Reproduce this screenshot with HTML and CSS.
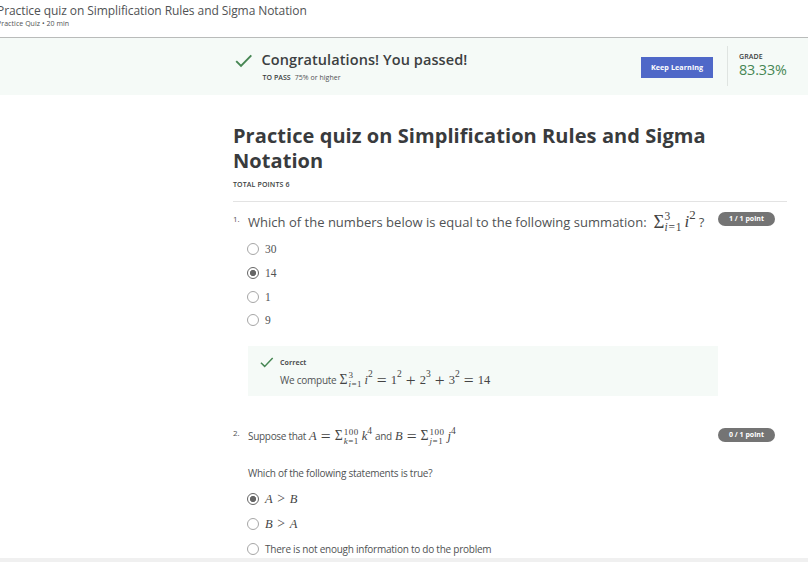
FILE: index.html
```html
<!DOCTYPE html>
<html lang="en">
<head>
<meta charset="utf-8">
<title>Practice quiz on Simplification Rules and Sigma Notation</title>
<link rel="stylesheet" href="styles.css">
</head>
<body>
<header class="topbar">
  <div class="topbar-title">Practice quiz on Simplification Rules and Sigma Notation</div>
  <div class="topbar-meta">Practice Quiz • 20 min</div>
</header>
<section class="banner">
  <svg class="check" width="18" height="14" viewBox="0 0 18 14"><path d="M1.2 7.2 6 12 16.3 1.3"/></svg>
  <div class="result">
    <div class="congrats">Congratulations! You passed!</div>
    <div class="pass"><b>TO PASS</b><span class="pass-mark">75% or higher</span></div>
  </div>
  <button class="keep">Keep Learning</button>
  <div class="grade"><div class="grade-label">GRADE</div><div class="grade-value">83.33%</div></div>
</section>
<main class="quiz">
  <h1>Practice quiz on Simplification Rules and Sigma<br>Notation</h1>
  <div class="total">TOTAL POINTS 6</div>
  <section class="question first">
    <div class="num">1.</div>
    <div class="body">
      <div class="prompt large"><span class="lead">Which of the numbers below is equal to the following summation:</span><span class="math"><span class="sigma">Σ</span><span class="lim"><span>3</span><span><i>i</i>=1</span></span><i>i</i><sup>2</sup></span><span class="qm">?</span></div>
      <div class="option"><span class="radio"></span><span class="digits">30</span></div>
      <div class="option"><span class="radio on"></span><span class="digits">14</span></div>
      <div class="option short"><span class="radio"></span><span class="digits">1</span></div>
      <div class="option"><span class="radio"></span><span class="digits">9</span></div>
      <div class="feedback">
        <svg class="check" width="14" height="11" viewBox="0 0 18 14"><path d="M1.2 7.2 6 12 16.3 1.3"/></svg>
        <div>
          <div class="correct">Correct</div>
          <div class="explain"><span class="compute">We compute</span><span class="math"><span class="sigma">Σ</span><span class="lim"><span>3</span><span><i>i</i>=1</span></span><i>i</i><sup>2</sup><span class="op">=</span>1<sup>2</sup><span class="op">+</span>2<sup>3</sup><span class="op">+</span>3<sup>2</sup><span class="op">=</span>14</span></div>
        </div>
      </div>
    </div>
    <div class="badge">1 / 1 point</div>
  </section>
  <section class="question second">
    <div class="num">2.</div>
    <div class="body">
      <div class="prompt"><span class="suppose">Suppose that</span><span class="math"><i>A</i><span class="op">=</span><span class="sigma">Σ</span><span class="lim"><span>100</span><span><i>k</i>=1</span></span><i>k</i><sup>4</sup></span><span class="and">and</span><span class="math"><i>B</i><span class="op">=</span><span class="sigma">Σ</span><span class="lim"><span>100</span><span><i>j</i>=1</span></span><i>j</i><sup>4</sup></span></div>
      <div class="ask">Which of the following statements is true?</div>
      <div class="option tall"><span class="radio on"></span><span class="math small"><i>A</i><span class="op">&gt;</span><i>B</i></span></div>
      <div class="option tall"><span class="radio"></span><span class="math small"><i>B</i><span class="op">&gt;</span><i>A</i></span></div>
      <div class="option tall"><span class="radio"></span><span class="words">There is not enough information to do the problem</span></div>
    </div>
    <div class="badge">0 / 1 point</div>
  </section>
</main>
<footer class="strip"></footer>
</body>
</html>
```
FILE: styles.css
```css
* { box-sizing: border-box; }
body { margin: 0; height: 562px; overflow: hidden; background: #fff; color: #505254; font-family: "Open Sans", sans-serif; white-space: nowrap; }
.topbar { height: 38px; border-bottom: 1px solid #b9bbba; padding-top: 2px; }
.topbar-title { margin-left: -3px; font-size: 12px; line-height: 17px; letter-spacing: -.08px; }
.topbar-meta { margin-left: -3px; font-size: 7px; line-height: 9px; letter-spacing: .05px; }
.banner { height: 57px; background: #f5faf7; display: flex; padding-left: 236px; }
.check { fill: none; stroke: #468653; stroke-width: 1.9; flex: none; }
.banner .check { margin: 16px 8px 0 -1px; }
.result { width: 380px; padding: 11px 0 0 .5px; }
.congrats { font-size: 14.5px; font-weight: 600; line-height: 21px; letter-spacing: .09px; color: #3c3f41; }
.pass { font-size: 7px; line-height: 15px; padding-left: 1px; letter-spacing: .04px; }
.pass b { font-weight: 600; color: #3c3f41; }
.pass-mark { margin-left: 4px; }
.keep { width: 72px; height: 21px; margin-top: 19px; padding: 0 0 1px; border: 0; background: #4f68c8; color: #fff; font: 700 7.2px "Open Sans", sans-serif; letter-spacing: .07px; }
.grade { margin: 8px 0 0 14px; height: 40px; border-left: 1px solid #dfe4e1; padding: 5px 0 0 11px; }
.grade-label { font-size: 7px; line-height: 11px; font-weight: 600; letter-spacing: .1px; color: #3c3f41; }
.grade-value { font-size: 14.3px; line-height: 15px; letter-spacing: -.1px; color: #468653; }
.quiz { width: 554px; margin-left: 233px; height: 463px; padding-top: 28px; }
h1 { margin: 0; font-size: 20px; line-height: 25px; font-weight: 700; letter-spacing: .065px; color: #393b3d; }
.total { height: 29px; border-bottom: 1px solid #e3e3e3; font-size: 7px; line-height: 23px; font-weight: 600; letter-spacing: .13px; color: #3c3f41; }
.question { display: flex; }
.num { width: 15px; font-size: 8px; line-height: 12px; padding-top: 11px; }
.body { width: 470px; }
.badge { width: 57px; height: 14px; border-radius: 7px; background: #747474; color: #fff; text-align: center; font-size: 7px; line-height: 14px; font-weight: 700; }
.first .badge { margin-top: 10px; }
.second { margin-top: 20px; }
.second .badge { margin-top: 12px; }
.prompt { display: flex; align-items: center; height: 40px; font-size: 10px; letter-spacing: -.3px; }
.large { height: 36px; padding-top: 3px; font-size: 13px; margin-bottom: -1px; letter-spacing: 0; }
.math { display: inline-flex; align-items: center; font-family: "Liberation Serif", serif; font-size: 12.5px; line-height: 14px; letter-spacing: 0; color: #444; }
.large .math { font-size: 17px; margin-left: 7px; }
.lead { letter-spacing: .015px; }
.qm { margin-left: 3px; }
.sigma { width: 9px; font-size: 1.1em; }
.large .sigma { width: 11px; }
.lim { display: flex; flex-direction: column; width: 18px; font-size: 9px; line-height: 9px; letter-spacing: .5px; }
.lim span { position: relative; top: .5px; }
.explain .lim { width: 16px; }
.large .lim { width: 20px; font-size: 11.5px; line-height: 11px; letter-spacing: .8px; }
sup { font-size: .76em; line-height: 1; vertical-align: baseline; position: relative; top: -.5em; }
.op { width: 18px; text-align: center; font-size: 1.4em; }
.small .op { width: 17px; font-size: 1.1em; }
.option { display: flex; align-items: center; height: 24px; }
.short { height: 23px; }
.tall { height: 25px; font-size: 10px; letter-spacing: -.24px; }
.radio { width: 12px; height: 12px; border: 1px solid #a6a6a6; border-radius: 50%; margin: 0 6px 0 -1px; flex: none; }
.radio.on { border-color: #666; background: radial-gradient(circle, #666 0 2.8px, transparent 3.3px); }
.digits { font: 11.5px "Liberation Serif", serif; }
.feedback { display: flex; height: 50px; margin-top: 14px; background: #f5faf7; padding: 11px 0 0 12px; }
.feedback .check { margin-right: 6px; }
.correct { font-size: 7px; line-height: 11px; font-weight: 700; letter-spacing: .07px; }
.explain { display: flex; align-items: center; height: 23px; font-size: 10px; letter-spacing: -.25px; }
.compute, .suppose { margin-right: 3px; }
.and { margin: 0 3px; }
.ask { font-size: 10px; line-height: 35px; height: 30px; letter-spacing: -.25px; }
.strip { height: 4px; background: #f0f0f0; }
```
